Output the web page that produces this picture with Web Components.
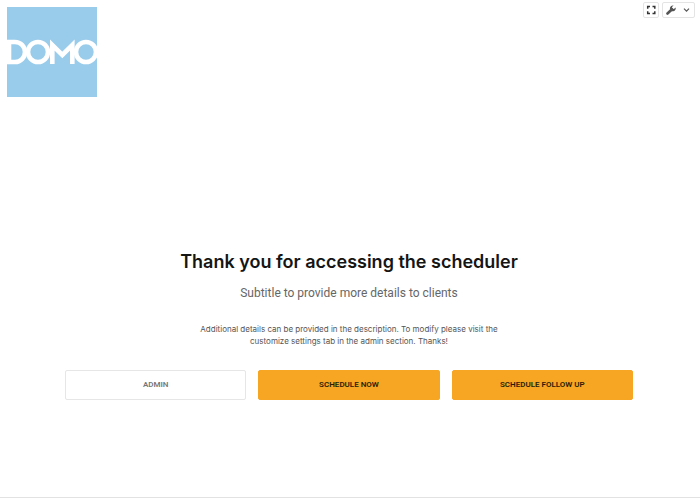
<!DOCTYPE html>
<html lang="en">
<head>
<meta charset="utf-8">
<title>Scheduler</title>
<style>
  body { margin: 0; background: #fff; font-family: Inter, "Liberation Sans", sans-serif; }
</style>
</head>
<body>
<scheduler-page>
  <brand-logo slot="logo"></brand-logo>
  <view-tools slot="tools"></view-tools>
  <welcome-message>
    <span slot="title">Thank you for accessing the scheduler</span>
    <span slot="subtitle">Subtitle to provide more details to clients</span>
    <span slot="details">Additional details can be provided in the description. To modify please visit the customize settings tab in the admin section. Thanks!</span>
  </welcome-message>
  <action-row>
    <action-button>ADMIN</action-button>
    <action-button primary>SCHEDULE NOW</action-button>
    <action-button primary>SCHEDULE FOLLOW UP</action-button>
  </action-row>
</scheduler-page>
<script>
  const define = (name, html) => customElements.define(name, class extends HTMLElement {
    constructor() {
      super();
      this.attachShadow({ mode: "open" }).innerHTML = html;
    }
  });

  define("scheduler-page", `
    <style>
      :host { display: flex; flex-direction: column; box-sizing: border-box; min-height: 100vh; padding-bottom: 1px; }
      header { display: flex; justify-content: space-between; align-items: flex-start; padding: 2px 5px 0 7px; }
      .logo { padding-top: 5px; }
      main { flex: 1; display: flex; flex-direction: column; justify-content: center; align-items: center;
        padding: 53px 67px 0 65px; border-bottom: 1px solid #e2e2e2; }
    </style>
    <header><div class="logo"><slot name="logo"></slot></div><slot name="tools"></slot></header>
    <main><slot></slot></main>`);

  define("brand-logo", `
    <style>:host { display: block; width: 90px; } svg { display: block; width: 100%; }</style>
    <svg viewBox="0 0 90 90" role="img" aria-label="Domo">
      <rect width="90" height="90" fill="#99ccea"/>
      <g fill="none" stroke="#fff" stroke-width="4.600">
        <path d="M2 35H8A10 10 0 0 1 8 55H2Z"/>
        <circle cx="31" cy="45" r="10"/>
        <path d="M45.300 57V38L55.300 48L65.300 38V57"/>
        <circle cx="79" cy="45" r="10"/>
      </g>
    </svg>`);

  define("view-tools", `
    <style>
      :host { display: flex; gap: 3px; }
      button { display: flex; align-items: center; justify-content: center; box-sizing: border-box; height: 16px;
        margin: 0; padding: 0 2px; background: #fff; border: 1px solid #e4e4e4; border-radius: 2px; color: #555; }
      .menu { gap: 7px; padding: 0 4px 0 3px; }
      svg { display: block; }
    </style>
    <button aria-label="Full screen">
      <svg width="10" height="10" viewBox="0 0 10 10" fill="none" stroke="#333" stroke-width="1.500"><path d="M1.700 3.800V1.500H4M6.500 1.500H8.800V3.800M8.800 6.200V8.500H6.500M4 8.500H1.700V6.200"/></svg>
    </button>
    <button class="menu" aria-label="Settings" aria-haspopup="menu">
      <svg width="10" height="10" viewBox="0 0 10 10"><path d="M1.500 8.500L6 4.200" stroke="currentColor" stroke-width="2.600" stroke-linecap="round"/><path d="M7.600 .6A2.900 2.900 0 1 0 9.600 2.600L7.900 4L6.200 3.700L6 2.100Z" fill="currentColor"/></svg>
      <svg width="7" height="6" viewBox="0 0 7 6" fill="none" stroke="currentColor" stroke-width="1.200"><path d="M1 1.700L3.500 4.200L6 1.700"/></svg>
    </button>`);

  define("welcome-message", `
    <style>
      :host { display: block; text-align: center; }
      h1, h2, p { margin: 0 auto; }
      h1 { font-size: 18px; line-height: 28px; font-weight: 600; color: #151515; }
      h2 { margin-top: 9px; font: 400 12px/16px Roboto, "Liberation Sans", sans-serif; color: #666; }
      p { margin-top: 22px; max-width: 300px; font-size: 8px; line-height: 12px; color: #555; }
    </style>
    <h1><slot name="title"></slot></h1>
    <h2><slot name="subtitle"></slot></h2>
    <p><slot name="details"></slot></p>`);

  define("action-row", `
    <style>
      :host { display: grid; grid-template-columns: repeat(3, 1fr); gap: 12px; width: 100%; margin-top: 23px; }
    </style>
    <slot></slot>`);

  define("action-button", `
    <style>
      :host { display: block; }
      button { display: block; box-sizing: border-box; width: 100%; height: 30px; margin: 0; padding: 0;
        font: 600 8px/12px Roboto, "Liberation Sans", sans-serif; color: #777;
        background: #fff; border: 1px solid #e6e6e6; border-radius: 2px; }
      :host([primary]) button { background: #f6a623; border-color: #f6a623; color: #2b1d06; }
    </style>
    <button type="button"><slot></slot></button>`);
</script>
</body>
</html>
